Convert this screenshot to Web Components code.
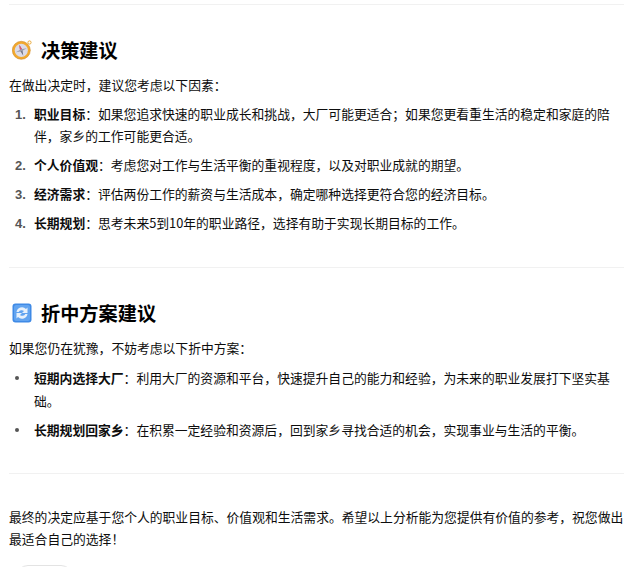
<!DOCTYPE html>
<html lang="zh-CN"><head><meta charset="utf-8">
<style>
html,body{margin:0;padding:0;background:#fff;overflow:hidden;height:568px}
body{font:12.8px/22.4px "Noto Sans CJK SC","Liberation Sans",sans-serif;color:#0d0d0d}
</style></head><body>
<template id="t-doc"><style>
:host{display:flex;flex-direction:column;height:564px;overflow:hidden;padding:4px 16px 0 9px}
</style><slot></slot></template>
<template id="t-sec"><style>
:host{display:block}
.h{display:flex;align-items:center;font-size:19.2px;line-height:28px;font-weight:700;color:#000;margin:0 0 10px}
.i{display:flex;width:32px;height:28px;align-items:center;padding-left:3px;box-sizing:border-box}
</style><div class="h"><span class="i"><slot name="icon"></slot></span><slot name="title"></slot></div><slot></slot></template>
<template id="t-list"><style>
:host{display:flex;flex-direction:column;gap:6.6px;margin-top:6.6px}
</style><slot></slot></template>
<template id="t-item"><style>
:host{display:grid;grid-template-columns:25px 1fr}
.m{color:#555;font-weight:700;font-size:13px;height:22.4px;line-height:24px;padding-left:6px;font-family:"Liberation Sans",sans-serif}
.d{width:4px;height:4px;border-radius:50%;background:#555;margin:9px 0 0 6px}
</style><div class="w"></div><div><slot></slot></div></template>
<template id="t-hr"><style>
:host{display:block;height:1px;background:#f1f1f1}
</style></template>
<template id="t-chip"><style>
:host{display:block;flex:none;width:57px;height:2px;overflow:hidden;margin:14px 0 0 7px}
div{height:30px;box-sizing:border-box;border:1px solid #e3e3e3;border-radius:12px}
</style><div></div></template>
<script>
class D extends HTMLElement{constructor(){super();this.attachShadow({mode:'open'}).append(document.getElementById(this.constructor.tid).content.cloneNode(true))}}
class Doc extends D{static tid='t-doc'}
class Sec extends D{static tid='t-sec'}
class List extends D{static tid='t-list'}
class Hr extends D{static tid='t-hr'}
class Chip extends D{static tid='t-chip'}
class Item extends D{static tid='t-item';connectedCallback(){const w=this.shadowRoot.querySelector('.w');const n=this.getAttribute('n');w.innerHTML=n?`<div class="m">${n}.</div>`:'<div class="d"></div>'}}
customElements.define('x-doc',Doc);customElements.define('x-sec',Sec);customElements.define('x-list',List);customElements.define('x-hr',Hr);customElements.define('x-chip',Chip);customElements.define('x-item',Item);
</script>
<x-doc>
<x-hr></x-hr>
<x-sec style="margin-top:31px">
<svg slot="icon" width="20" height="20" viewBox="0 0 20 20"><circle cx="17.500" cy="2.500" r="1.600" fill="none" stroke="#e8a83a" stroke-width="1"/><circle cx="9.300" cy="10.300" r="9" fill="#f2a92e" stroke="#d08c2c" stroke-width=".6"/><circle cx="9.300" cy="10.300" r="6.600" fill="#dcdbe6"/><path d="M9.300 4.500l1.200 5.800-1.200 5.800-1.200-5.800z" fill="#6f7180" transform="rotate(-20 9.300 10.300)"/><path d="M9.300 4.500l1.200 5.300h-2.400z" fill="#e5526a" transform="rotate(-20 9.300 10.300)"/><path d="M3.500 10.300l5.800-1 5.800 1-5.800 1z" fill="#9b9daa" transform="rotate(-20 9.300 10.300)"/></svg>
<span slot="title">决策建议</span>
<div>在做出决定时，建议您考虑以下因素：</div>
<x-list>
<x-item n="1"><b>职业目标</b>：如果您追求快速的职业成长和挑战，大厂可能更适合；如果您更看重生活的稳定和家庭的陪伴，家乡的工作可能更合适。</x-item>
<x-item n="2"><b>个人价值观</b>：考虑您对工作与生活平衡的重视程度，以及对职业成就的期望。</x-item>
<x-item n="3"><b>经济需求</b>：评估两份工作的薪资与生活成本，确定哪种选择更符合您的经济目标。</x-item>
<x-item n="4"><b>长期规划</b>：思考未来5到10年的职业路径，选择有助于实现长期目标的工作。</x-item>
</x-list>
</x-sec>
<x-hr style="margin-top:32px"></x-hr>
<x-sec style="margin-top:31px">
<svg slot="icon" width="20" height="20" viewBox="0 0 20 20"><rect x=".5" y=".5" width="19" height="19" rx="3" fill="#3f8ae6"/><rect x="2" y="2" width="16" height="16" rx="2" fill="#62a4f0"/><path d="M4.500 9a5.500 5.500 0 0 1 9.500-3l1.500-1.500V10h-5.500l2-2A3.400 3.400 0 0 0 6.700 9z" fill="#e8f1fb"/><path d="M15.500 11a5.500 5.500 0 0 1-9.500 3l-1.500 1.500V10H10l-2 2a3.400 3.400 0 0 0 5.300-1z" fill="#e8f1fb"/></svg>
<span slot="title">折中方案建议</span>
<div>如果您仍在犹豫，不妨考虑以下折中方案：</div>
<x-list style="margin-top:8px">
<x-item><b>短期内选择大厂</b>：利用大厂的资源和平台，快速提升自己的能力和经验，为未来的职业发展打下坚实基础。</x-item>
<x-item><b>长期规划回家乡</b>：在积累一定经验和资源后，回到家乡寻找合适的机会，实现事业与生活的平衡。</x-item>
</x-list>
</x-sec>
<x-hr style="margin-top:32px"></x-hr>
<div style="margin-top:32px">最终的决定应基于您个人的职业目标、价值观和生活需求。希望以上分析能为您提供有价值的参考，祝您做出最适合自己的选择！</div>
<x-chip></x-chip>
</x-doc>
</body></html>
